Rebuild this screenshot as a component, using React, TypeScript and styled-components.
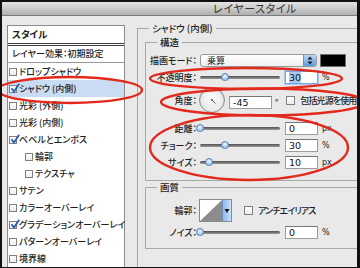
import React from "react";
import styled, { createGlobalStyle } from "styled-components";

const GlobalStyle = createGlobalStyle`
  html, body {
    margin: 0;
    padding: 0;
    background: #000;
  }
`;

type StyleItem = {
  label: string;
  checked?: boolean;
  active?: boolean;
  indent?: boolean;
};

const styleItems: StyleItem[] = [
  { label: "ドロップシャドウ" },
  { label: "シャドウ (内側)", checked: true, active: true },
  { label: "光彩 (外側)" },
  { label: "光彩 (内側)" },
  { label: "ベベルとエンボス", checked: true },
  { label: "輪郭", indent: true },
  { label: "テクスチャ", indent: true },
  { label: "サテン" },
  { label: "カラーオーバーレイ" },
  { label: "グラデーションオーバーレイ", checked: true },
  { label: "パターンオーバーレイ" },
  { label: "境界線" },
];

const CheckBox: React.FC<{ checked?: boolean; size?: number }> = ({
  checked,
  size = 8,
}) => (
  <Box $size={size}>
    {checked && (
      <CheckMark viewBox="0 0 10 10" $size={size}>
        <path d="M1.5 5.2 L4 8.6 L9.2 0.8" />
      </CheckMark>
    )}
  </Box>
);

const SliderField: React.FC<{
  label: string;
  pos: number;
  value: string;
  unit: string;
  mt: number;
  selected?: boolean;
}> = ({ label, pos, value, unit, mt, selected }) => (
  <Row $mt={mt} $h={13}>
    <Label>{label}</Label>
    <Track>
      <Thumb style={{ left: `${pos}%` }} />
    </Track>
    <NumInput $w={33} $ml={5} $focus={selected}>
      {selected ? <Selected>{value}</Selected> : value}
    </NumInput>
    <Unit>{unit}</Unit>
  </Row>
);

export default function App() {
  return (
    <>
      <GlobalStyle />
      <Frame>
        <TitleBar>レイヤースタイル</TitleBar>
        <Body>
          <StylePanel>
            <PanelHeader>スタイル</PanelHeader>
            <PanelDefault>レイヤー効果：初期設定</PanelDefault>
            {styleItems.map((item) => (
              <ListItem
                key={item.label}
                $active={item.active}
                $indent={item.indent}
              >
                <CheckBox checked={item.checked} />
                <span>{item.label}</span>
              </ListItem>
            ))}
          </StylePanel>

          <OuterGroup>
            <Legend>シャドウ (内側)</Legend>

            <InnerGroup $mt={3}>
              <Legend>構造</Legend>
              <Row $mt={6} $h={13}>
                <Label>描画モード：</Label>
                <Select>
                  <SelectText>乗算</SelectText>
                  <Stepper>
                    <svg width="6" height="9" viewBox="0 0 6 9">
                      <path d="M3 0.5 L5.5 3.5 H0.5 Z" fill="#1a1a1a" />
                      <path d="M3 8.5 L5.5 5.5 H0.5 Z" fill="#1a1a1a" />
                    </svg>
                  </Stepper>
                </Select>
                <Swatch />
              </Row>

              <SliderField
                label="不透明度："
                pos={31}
                value="30"
                unit="%"
                mt={4}
                selected
              />

              <Row $mt={3} $h={26}>
                <Label>角度：</Label>
                <Dial>
                  <svg width="26" height="26" viewBox="0 0 26 26">
                    <line
                      x1="13"
                      y1="13"
                      x2="16.5"
                      y2="16.5"
                      stroke="#555"
                      strokeWidth="1"
                    />
                    <circle cx="13" cy="13" r="1" fill="#555" />
                  </svg>
                </Dial>
                <NumInput $w={43} $ml={4} $offset={2}>
                  -45
                </NumInput>
                <Degree>°</Degree>
                <CheckLabel $ml={8}>
                  <CheckBox size={9} />
                  <span>包括光源を使用</span>
                </CheckLabel>
              </Row>

              <SliderField label="距離：" pos={0} value="0" unit="px" mt={9} />
              <SliderField label="チョーク：" pos={31} value="30" unit="%" mt={4} />
              <SliderField label="サイズ：" pos={11} value="10" unit="px" mt={4} />
              <GroupEnd $h={11} />
            </InnerGroup>

            <InnerGroup $mt={1}>
              <Legend>画質</Legend>
              <Row $mt={6} $h={23}>
                <Label>輪郭：</Label>
                <Contour>
                  <ContourPreview>
                    <svg width="22" height="21" viewBox="0 0 22 21">
                      <rect width="22" height="21" fill="#fff" />
                      <polygon points="0,21 22,0 22,21" fill="#8c8c8c" />
                    </svg>
                  </ContourPreview>
                  <ContourArrow>
                    <svg width="6" height="6" viewBox="0 0 6 6">
                      <path d="M0.5 1 H5.5 L3 5 Z" fill="#111" />
                    </svg>
                  </ContourArrow>
                </Contour>
                <CheckLabel $ml={12}>
                  <CheckBox size={9} />
                  <span>アンチエイリアス</span>
                </CheckLabel>
              </Row>
              <SliderField label="ノイズ：" pos={0} value="0" unit="%" mt={4} />
              <GroupEnd $h={9} />
            </InnerGroup>
          </OuterGroup>
        </Body>

        {/* red annotation rings drawn over the screenshot */}
        <Annotations viewBox="0 0 360 268" width="360" height="268">
          <ellipse cx="70" cy="90" rx="72" ry="13" />
          <ellipse cx="246" cy="78.5" rx="96" ry="10.5" />
          <ellipse cx="263" cy="102" rx="102" ry="13.5" />
          <ellipse cx="249" cy="147.5" rx="99" ry="32.5" />
        </Annotations>
      </Frame>
    </>
  );
}

const Frame = styled.div`
  position: relative;
  width: 360px;
  height: 268px;
  box-sizing: border-box;
  border: 2px solid #111;
  border-right-width: 3px;
  border-bottom-width: 1px;
  background: #e9e9e9;
  overflow: hidden;
  display: flex;
  flex-direction: column;
  font-family: "Noto Sans CJK JP", "Noto Sans", sans-serif;
  font-feature-settings: "palt";
  color: #1e1e1e;
`;

const TitleBar = styled.div`
  flex: none;
  height: 13px;
  padding-left: 151px;
  background: linear-gradient(#e4e4e4, #b0b0b0);
  border-bottom: 1px solid #7c7c7c;
  font-size: 11px;
  line-height: 13px;
  text-align: center;
  color: #333;
  letter-spacing: 0.6px;
`;

const Body = styled.div`
  flex: 1;
  display: flex;
  align-items: flex-start;
  padding: 9px 0 0 5px;
  min-height: 0;
`;

const StylePanel = styled.div`
  flex: none;
  width: 118px;
  height: 260px;
  box-sizing: border-box;
  border: 1px solid #8c8c8c;
  background: #fff;
  font-size: 9px;
`;

const PanelHeader = styled.div`
  height: 17px;
  line-height: 17px;
  padding-left: 4px;
  font-size: 9.5px;
  font-weight: 700;
  border-bottom: 3px double #3a3a3a;
`;

const PanelDefault = styled.div`
  height: 16px;
  line-height: 16px;
  padding-left: 4px;
  font-weight: 500;
  border-bottom: 1px solid #9a9a9a;
`;

const ListItem = styled.div<{ $active?: boolean; $indent?: boolean }>`
  display: flex;
  align-items: center;
  gap: 2px;
  height: 17px;
  padding-left: ${({ $indent }) => ($indent ? 17 : 1)}px;
  background: ${({ $active }) => ($active ? "#c9dcf3" : "transparent")};
  font-weight: 500;
  white-space: nowrap;
`;

const Box = styled.span<{ $size: number }>`
  position: relative;
  flex: none;
  width: ${({ $size }) => $size}px;
  height: ${({ $size }) => $size}px;
  box-sizing: border-box;
  border: 1px solid #808080;
  background: linear-gradient(#fff, #ececec);
`;

const CheckMark = styled.svg<{ $size: number }>`
  position: absolute;
  left: 0;
  top: -3px;
  width: ${({ $size }) => $size + 2}px;
  height: ${({ $size }) => $size + 2}px;
  fill: none;
  stroke: #2a5fb4;
  stroke-width: 1.8;
`;

const OuterGroup = styled.fieldset`
  flex: none;
  width: 240px;
  height: 260px;
  margin: -2px 0 0 12px;
  padding: 0;
  min-width: 0;
  box-sizing: border-box;
  border: 1px solid #a8a8a8;
`;

const InnerGroup = styled.fieldset<{ $mt: number }>`
  margin: ${({ $mt }) => $mt}px 0 0 7px;
  padding: 0;
  min-width: 0;
  border: 1px solid #a8a8a8;
`;

const Legend = styled.legend`
  margin-left: 11px;
  padding: 0 3px;
  font-size: 9.5px;
  line-height: 11px;
  font-weight: 500;
`;

const Row = styled.div<{ $mt: number; $h: number }>`
  display: flex;
  align-items: center;
  height: ${({ $h }) => $h}px;
  margin-top: ${({ $mt }) => $mt}px;
  white-space: nowrap;
`;

const GroupEnd = styled.div<{ $h: number }>`
  height: ${({ $h }) => $h}px;
`;

const Label = styled.span`
  flex: none;
  width: 51px;
  margin-right: 3px;
  text-align: right;
  font-size: 9px;
  font-weight: 500;
`;

const Select = styled.div`
  display: flex;
  width: 117px;
  height: 13px;
  box-sizing: border-box;
  border: 1px solid #9a9a9a;
  border-radius: 3px;
  background: linear-gradient(#fff, #f0f0f0);
  overflow: hidden;
`;

const SelectText = styled.span`
  flex: 1;
  padding-left: 6px;
  font-size: 9px;
  line-height: 11px;
`;

const Stepper = styled.span`
  display: flex;
  align-items: center;
  justify-content: center;
  width: 12px;
  background: linear-gradient(#b9d6f6, #5d9be2);
  border-left: 1px solid #6b8fbf;
`;

const Swatch = styled.span`
  width: 26px;
  height: 13px;
  margin-left: 3px;
  box-sizing: border-box;
  border: 1px solid #6e6e6e;
  background: #000;
`;

const Track = styled.span`
  position: relative;
  flex: none;
  width: 80px;
  height: 3px;
  border-radius: 2px;
  background: linear-gradient(#4e4e4e, #9a9a9a);
`;

const Thumb = styled.span`
  position: absolute;
  top: -3px;
  width: 8px;
  height: 8px;
  box-sizing: border-box;
  transform: translateX(-50%);
  border-radius: 50% 50% 45% 45%;
  border: 1px solid #5a80b4;
  background: radial-gradient(circle at 50% 35%, #eef6ff, #7eaee6);
`;

const NumInput = styled.span<{
  $w: number;
  $ml: number;
  $focus?: boolean;
  $offset?: number;
}>`
  flex: none;
  width: ${({ $w }) => $w}px;
  height: 13px;
  margin-left: ${({ $ml }) => $ml}px;
  margin-top: ${({ $offset }) => ($offset ?? 0) * 2}px;
  box-sizing: border-box;
  padding-left: 3px;
  border: 1px solid ${({ $focus }) => ($focus ? "#7aa7e0" : "#9c9c9c")};
  border-top-color: ${({ $focus }) => ($focus ? "#7aa7e0" : "#777")};
  box-shadow: ${({ $focus }) => ($focus ? "0 0 0 1px #a9c8ee" : "none")};
  background: #fff;
  font-family: "DejaVu Sans", "Liberation Sans", sans-serif;
  font-size: 9.5px;
  line-height: 11px;
  color: #111;
`;

const Selected = styled.span`
  background: #a7c9f2;
`;

const Unit = styled.span`
  margin-left: 4px;
  font-family: "DejaVu Sans", "Liberation Sans", sans-serif;
  font-size: 8px;
  color: #222;
`;

const Dial = styled.span`
  flex: none;
  width: 26px;
  height: 26px;
  margin-left: -1px;
  box-sizing: border-box;
  border: 1px solid #8e8e8e;
  border-radius: 50%;
  background: radial-gradient(circle at 50% 40%, #fafafa, #e2e2e2);
  box-shadow: inset 0 1px 2px rgba(0, 0, 0, 0.25);
  overflow: hidden;

  svg {
    display: block;
    margin: -1px;
  }
`;

const Degree = styled.span`
  margin-left: 3px;
  align-self: flex-start;
  margin-top: 9px;
  font-size: 9px;
`;

const CheckLabel = styled.span<{ $ml: number }>`
  display: flex;
  align-items: center;
  gap: 5px;
  margin-left: ${({ $ml }) => $ml}px;
  font-size: 9px;
  font-weight: 500;
  letter-spacing: -0.9px;
`;

const Contour = styled.span`
  flex: none;
  display: flex;
  height: 23px;
  margin-left: -1px;
  box-sizing: border-box;
  border: 1px solid #8a8a8a;
`;

const ContourPreview = styled.span`
  display: block;
  width: 22px;

  svg {
    display: block;
  }
`;

const ContourArrow = styled.span`
  display: flex;
  align-items: center;
  justify-content: center;
  width: 8px;
  background: linear-gradient(90deg, #8fbaf0, #c9e0fb);
  border-left: 1px solid #6d8fbc;
`;

const Annotations = styled.svg`
  position: absolute;
  top: -2px;
  left: -2px;
  pointer-events: none;
  fill: none;
  stroke: #e2291c;
  stroke-width: 2.4;
`;
